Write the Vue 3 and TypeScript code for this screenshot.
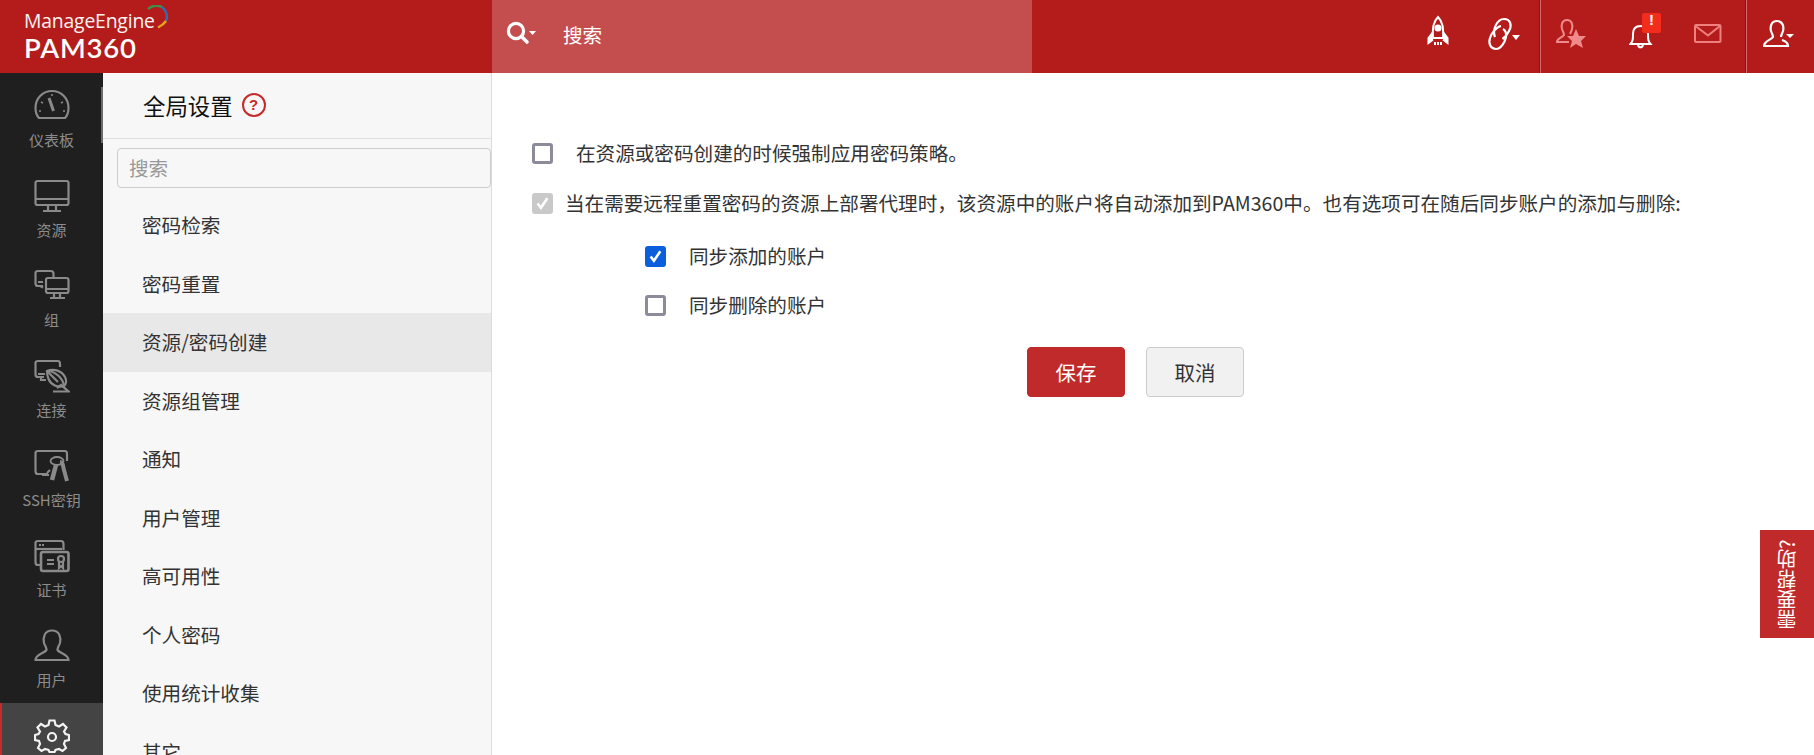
<script setup lang="ts">
const rail = [
  { id: 'dash', label: '仪表板' },
  { id: 'res', label: '资源' },
  { id: 'group', label: '组' },
  { id: 'conn', label: '连接' },
  { id: 'ssh', label: 'SSH密钥' },
  { id: 'cert', label: '证书' },
  { id: 'user', label: '用户' },
  { id: 'admin', label: '' },
]
const menu = ['密码检索', '密码重置', '资源/密码创建', '资源组管理', '通知', '用户管理', '高可用性', '个人密码', '使用统计收集', '其它']
</script>

<template>
  <div class="page">
    <header class="top">
      <div class="logo">
        <div class="me">ManageEngine</div>
        <div class="pam">PAM360</div>
        <svg class="arc" width="22" height="24" viewBox="0 0 22 24" fill="none" stroke-width="2.400">
          <path d="M1 4 C5 0 11 0 15 2" stroke="#3f8f4a" />
          <path d="M15 2 C20 6 21 12 19 16" stroke="#2d6fb5" />
          <path d="M19 16 C17 19 14 21 11 22.500" stroke="#e8a51c" />
        </svg>
      </div>
      <div class="search">
        <svg width="32" height="28" viewBox="0 0 32 28" fill="none" class="mag">
          <circle cx="11" cy="11" r="7.600" stroke="#fff" stroke-width="3.200" />
          <path d="M16.500 16.500 L22 22" stroke="#fff" stroke-width="3.600" stroke-linecap="round" />
          <path d="M24 11 h7 l-3.500 4 z" fill="#fff" />
        </svg>
        <span>搜索</span>
      </div>
      <div class="spacer"></div>
      <div class="group g1">
        <svg class="ic" width="24" height="34" viewBox="0 0 24 34" fill="none" stroke="#fff" stroke-width="2">
          <path d="M12 2 C7 7 6.500 13 7 23 H17 C17.500 13 17 7 12 2 Z" />
          <circle cx="12" cy="13" r="2.600" fill="#fff" />
          <path d="M7 17 L2.500 23 V28 L7 24.500 M17 17 L21.500 23 V28 L17 24.500" fill="#fff" />
          <path d="M9 27 V30 M12 27 V30 M15 27 V30" />
        </svg>
        <span class="link">
          <svg width="36" height="34" viewBox="0 0 36 34" fill="none" stroke="#fff" stroke-width="2.200">
            <path d="M9 20 C6 13 11 2 18 2 C25 2 26 9 23 14 C21.500 17 19.500 20 16.500 22" />
            <path d="M15 9 C10 10 5 17 4 21 C2 27 5 32 10 32 C15 32 19 25 20 20 C20.500 16 19 13 17 12" />
            <path d="M26 18 h8 l-4 5 z" fill="#fff" stroke="none" />
          </svg>
        </span>
      </div>
      <div class="group g2">
        <svg class="ic" width="32" height="32" viewBox="0 0 32 32" fill="none" stroke="#ed8a8a" stroke-width="2">
          <path d="M11 2 C6 2 5 7 6 11 C7 14 8 15 8 17 C6 20 1 20 1 24 H13" />
          <path d="M11 2 C16 2 17 7 16 11 C15.600 13 15 14 14 16" />
          <path d="M20 11 L23 18 H30 L25 23 L27 30 L20 26 L14 30 L16 23 L11 18 H17 Z" fill="#f08a8a" stroke="none" />
        </svg>
        <span class="bell">
          <svg width="24" height="32" viewBox="0 0 24 32" fill="none" stroke="#fff" stroke-width="2">
            <path d="M1.500 25 H21.500 C19 22 19 20 19 15 C19 9 16 7 11.500 7 C7 7 4 9 4 15 C4 20 4 22 1.500 25 Z" />
            <path d="M9 26 C9.500 29 13.500 29 14 26" />
          </svg>
          <b class="badge">!</b>
        </span>
        <svg class="ic" width="28" height="20" viewBox="0 0 28 20" fill="none" stroke="#ee8080" stroke-width="2">
          <rect x="1" y="1" width="25.500" height="17" rx="1" />
          <path d="M1.500 2 L14 11.500 L26 2" />
        </svg>
      </div>
      <div class="group g3">
        <svg width="32" height="30" viewBox="0 0 32 30" fill="none" stroke="#fff" stroke-width="2.200">
          <path d="M14 2 C8 2 7 8 8 12 C9 15 10 16 10 18 C8 21 1 22 1 27 H25 C25 24 22 22 19 21 M18 18 C18 16 19 15 20 12 C21 8 20 2 14 2" />
          <path d="M23 15 h8 l-4 4 z" fill="#fff" stroke="none" />
        </svg>
      </div>
    </header>

    <div class="body">
      <nav class="rail">
        <div v-for="r in rail" :key="r.id" class="rail-item" :class="{ on: r.id === 'admin' }">
          <svg width="36" height="34" viewBox="0 0 36 34" fill="none" :stroke="r.id === 'admin' ? '#f2f2f2' : '#8a8a8a'" stroke-width="2.200">
            <template v-if="r.id === 'dash'">
              <path d="M5 29 C2 26 1.500 22 1.500 19 C1.500 9 9 2 18 2 C27 2 34.500 9 34.500 19 C34.500 22 34 26 31 29 Z" />
              <path d="M15 9 L19.500 22" stroke-width="3" />
              <path d="M7 13 L9 14 M29 13 L27 14 M18 5 V7 M5 22 H7 M31 22 H29" stroke-width="1.500" />
            </template>
            <template v-else-if="r.id === 'res'">
              <rect x="1.500" y="2" width="33" height="24" rx="2" />
              <path d="M1.500 20 H34.500" />
              <path d="M14 26 V31 M22 26 V31 M9 32 H27" />
            </template>
            <template v-else-if="r.id === 'group'">
              <path d="M9 17 H4 C2 17 1.500 16 1.500 14 V4 C1.500 2.500 2.500 2 4 2 H17 C19 2 19.500 3 19.500 5 V8" />
              <path d="M4 13 H9 M6 17 L9 18.500" />
              <rect x="12" y="9" width="22.500" height="15" rx="2" />
              <path d="M12 20 H34.500 M20 24 V28 M26 24 V28 M16 29 H31" />
            </template>
            <template v-else-if="r.id === 'conn'">
              <path d="M10 18 H4 C2 18 1.500 17 1.500 15 V4 C1.500 2.500 2.500 2 4 2 H24 C25.500 2 26 3 26 5 V8" />
              <path d="M4 15 H11 M7 18 V21 H12" />
              <path d="M13 12 C21 12 29 19 30 27 C24 29 17 26 14.500 20 C13.500 17 13 14 13 12 Z" />
              <path d="M13 12 L24 23" />
              <path d="M13 12 C20 9 28 12 31 18 C33 22 32 25 30 27" />
              <path d="M23 29 L27 26 L34.500 32.500 H19" />
            </template>
            <template v-else-if="r.id === 'ssh'">
              <path d="M14 25 H4 C2 25 1.500 24 1.500 22 V4 C1.500 2.500 2.500 2 4 2 H31 C32.500 2 33 3 33 5 V12" />
              <path d="M8 26 H15 M13 24 L16 21" />
              <ellipse cx="23" cy="12" rx="6.500" ry="4" stroke-width="1.800" />
              <path d="M22 16 L18 31" stroke-width="4.500" />
              <path d="M26 13 C29 13 29 17 30 21 L33 32" stroke-width="4" />
            </template>
            <template v-else-if="r.id === 'cert'">
              <path d="M6 26 H4 C2 26 1.500 25 1.500 23 V4 C1.500 2.500 2.500 2 4 2 H27 C29 2 29.500 3 29.500 5 V11" />
              <path d="M1.500 10 H28" />
              <path d="M5 6 H11" stroke-width="2" stroke-dasharray="2 1" />
              <rect x="7" y="13" width="27.500" height="19" rx="2" stroke-width="2.600" />
              <path d="M13 21 H20 M13 25 H20" />
              <circle cx="27" cy="20" r="3" />
              <path d="M25 23 V29 L27 27 L29 29 V23" />
            </template>
            <template v-else-if="r.id === 'user'">
              <path d="M18 1.500 C10 1.500 9 9 10 14 C11 17 12.500 18 12.500 21 C10 24.500 1.500 25 1.500 31 H34.500 C34.500 25 26 24.500 23.500 21 C23.500 18 25 17 26 14 C27 9 26 1.500 18 1.500 Z" />
            </template>
            <template v-else>
              <path d="M15.500 1.500 H20.500 L21.500 6 L25 7.500 L29 5 L32.500 8.500 L30 12.500 L31.500 15 L35 16 V21 L31 22 L30 25 L32 29 L28.500 32 L25 30 L21.500 31 L20.500 33 H15.500 L14.500 31 L11 30 L7.500 32 L4 29 L6 25 L5 22 L1 21 V16 L4.500 15 L6 12.500 L3.500 8.500 L7 5 L11 7.500 L14.500 6 Z" />
              <circle cx="18" cy="18" r="4" />
            </template>
          </svg>
          <span v-if="r.label" class="rail-label">{{ r.label }}</span>
        </div>
      </nav>

      <aside class="panel">
        <div class="panel-head">
          <span class="panel-title">全局设置</span>
          <span class="help">?</span>
        </div>
        <div class="panel-search">搜索</div>
        <ul class="menu">
          <li v-for="m in menu" :key="m" :class="{ active: m === '资源/密码创建' }">{{ m }}</li>
        </ul>
      </aside>

      <main class="main">
        <div class="row r1">
          <span class="cb"></span>
          <span class="t1">在资源或密码创建的时候强制应用密码策略。</span>
        </div>
        <div class="row r2">
          <span class="cb disabled">
            <svg width="16" height="16" viewBox="0 0 14 14" fill="none"><path d="M2.500 7.500 L5.500 11.500 L11.500 2.500" stroke="#fff" stroke-width="2.400" /></svg>
          </span>
          <span class="t2">当在需要远程重置密码的资源上部署代理时，该资源中的账户将自动添加到PAM360中。也有选项可在随后同步账户的添加与删除:</span>
        </div>
        <div class="row r3">
          <span class="cb checked">
            <svg width="16" height="16" viewBox="0 0 14 14" fill="none"><path d="M2.500 7.500 L5.500 11.500 L11.500 2.500" stroke="#fff" stroke-width="2.400" /></svg>
          </span>
          <span class="t3">同步添加的账户</span>
        </div>
        <div class="row r4">
          <span class="cb"></span>
          <span class="t3">同步删除的账户</span>
        </div>
        <div class="buttons">
          <button class="btn save">保存</button>
          <button class="btn cancel">取消</button>
        </div>
      </main>
    </div>

    <div class="feedback">需要帮助?</div>
  </div>
</template>

<style>
html, body { margin: 0; overflow: hidden; }
</style>

<style scoped>
.page {
  position: relative;
  width: 1814px;
  height: 755px;
  overflow: hidden;
  display: flex;
  flex-direction: column;
  background: #fff;
  font-family: "Noto Sans CJK SC", "Liberation Sans", sans-serif;
  color: #333;
}
.top {
  flex: 0 0 73px;
  display: flex;
  align-items: stretch;
  background: #b41c1c;
}
.logo {
  position: relative;
  flex: 0 0 492px;
  padding: 9px 0 0 24px;
  box-sizing: border-box;
  color: #fff;
  font-family: "Open Sans", sans-serif;
}
.me { font-size: 19.400px; line-height: 23px; letter-spacing: -0.2px; opacity: 0.95; }
.pam { font-size: 27.500px; line-height: 32px; font-weight: 600; letter-spacing: 0.8px; font-family: "Lato", sans-serif; }
.arc { position: absolute; left: 147px; top: 5px; }
.search {
  flex: 0 0 540px;
  background: #c44e4e;
  display: flex;
  align-items: center;
  padding-left: 13px;
  box-sizing: border-box;
  color: #fff;
  font-size: 19.600px;
}
.mag { margin-top: -6px; margin-right: 26px; }
.search span { margin-top: -4px; }
.spacer { flex: 1; }
.group { display: flex; align-items: center; box-sizing: border-box; }
.g1 { width: 114px; border-right: 1px solid #8f1212; gap: 36px; padding-bottom: 9px; }
.g2 {
  width: 206px;
  border-left: 1px solid #d46a6a;
  border-right: 1px solid #8f1212;
  padding-left: 15px;
  gap: 41px;
  padding-bottom: 6px;
}
.g3 { width: 68px; border-left: 1px solid #d46a6a; padding-left: 16px; padding-bottom: 6px; }
.link { display: flex; margin-top: 4px; }
.bell { position: relative; display: flex; margin-top: 2px; }
.badge {
  position: absolute;
  left: 13px;
  top: -6px;
  width: 19px;
  height: 20px;
  background: #f32d1c;
  border-radius: 2px;
  color: #fff;
  font: 700 15px/13px "Liberation Sans", sans-serif;
  text-align: center;
}
.body { flex: 1; display: flex; min-height: 0; }
.rail { position: relative; flex: 0 0 103px; background: #1f1f1f; overflow: hidden; }
.rail::after {
  content: "";
  position: absolute;
  right: 0;
  top: 14px;
  width: 2px;
  height: 56px;
  background: #6a6a6a;
}
.rail-item {
  height: 90px;
  box-sizing: border-box;
  display: flex;
  flex-direction: column;
  align-items: center;
  padding-top: 16px;
  gap: 7px;
}
.rail-item.on { background: #444; box-shadow: inset 2px 0 0 #c62a2a; }
.rail-label { font-size: 15px; line-height: 20px; color: #8c8c8c; white-space: nowrap; }
.panel {
  position: relative;
  flex: 0 0 389px;
  background: #f7f7f7;
  border-right: 1px solid #dcdcdc;
  box-sizing: border-box;
  overflow: hidden;
}
.panel-head {
  height: 66px;
  box-sizing: border-box;
  border-bottom: 1px solid #e0e0e0;
  display: flex;
  align-items: center;
  padding: 0 0 2px 40px;
  gap: 9px;
}
.panel-title { font-size: 22.400px; color: #111; }
.help {
  width: 24px;
  height: 24px;
  box-sizing: border-box;
  border: 2px solid #c62a2a;
  border-radius: 50%;
  color: #c62a2a;
  font: 700 15px/20px "Liberation Sans", sans-serif;
  text-align: center;
}
.panel-search {
  margin: 9px 0 0 14px;
  height: 40px;
  box-sizing: border-box;
  border: 1px solid #ccc;
  border-radius: 4px;
  padding-left: 11px;
  font-size: 19.600px;
  line-height: 37px;
  color: #999;
}
.menu { list-style: none; margin: 8px 0 0; padding: 0; }
.menu li {
  height: 58.500px;
  line-height: 57px;
  padding-left: 39px;
  font-size: 19.600px;
  color: #333;
}
.menu li.active { background: #e8e8e8; }
.main { flex: 1; padding-left: 40px; min-width: 0; }
.row { display: flex; align-items: center; font-size: 19.600px; line-height: 26px; color: #333; white-space: nowrap; }
.r1 { margin-top: 67px; }
.r2 { margin-top: 24px; }
.r3 { margin-top: 27px; padding-left: 113px; }
.r4 { margin-top: 23px; padding-left: 113px; }
.cb {
  flex: none;
  width: 21px;
  height: 21px;
  box-sizing: border-box;
  border: 3px solid #8b8b9a;
  border-radius: 3px;
  background: #fff;
  display: flex;
  align-items: center;
  justify-content: center;
}
.cb.disabled { background: #c9c9c9; border-color: #c9c9c9; }
.cb.checked { background: #0b5fdc; border-color: #0b5fdc; }
.t1 { margin-left: 23px; }
.t2 { margin-left: 12px; }
.t3 { margin-left: 23px; }
.buttons { display: flex; gap: 21px; margin-top: 29px; padding-left: 495px; }
.btn {
  width: 98px;
  height: 50px;
  border-radius: 4px;
  font-family: "Noto Sans CJK SC", sans-serif;
  font-size: 20.500px;
  padding: 0;
}
.save { background: #c12a2a; border: 1px solid #c12a2a; color: #fff; }
.cancel { background: #f1f1f1; border: 1px solid #ccc; color: #333; }
.feedback {
  position: absolute;
  right: 0;
  top: 530px;
  width: 54px;
  height: 108px;
  background: #c12a2a;
  color: #fff;
  writing-mode: vertical-rl;
  transform: rotate(180deg);
  font-size: 20px;
  line-height: 54px;
  text-align: center;
  white-space: nowrap;
}
</style>
